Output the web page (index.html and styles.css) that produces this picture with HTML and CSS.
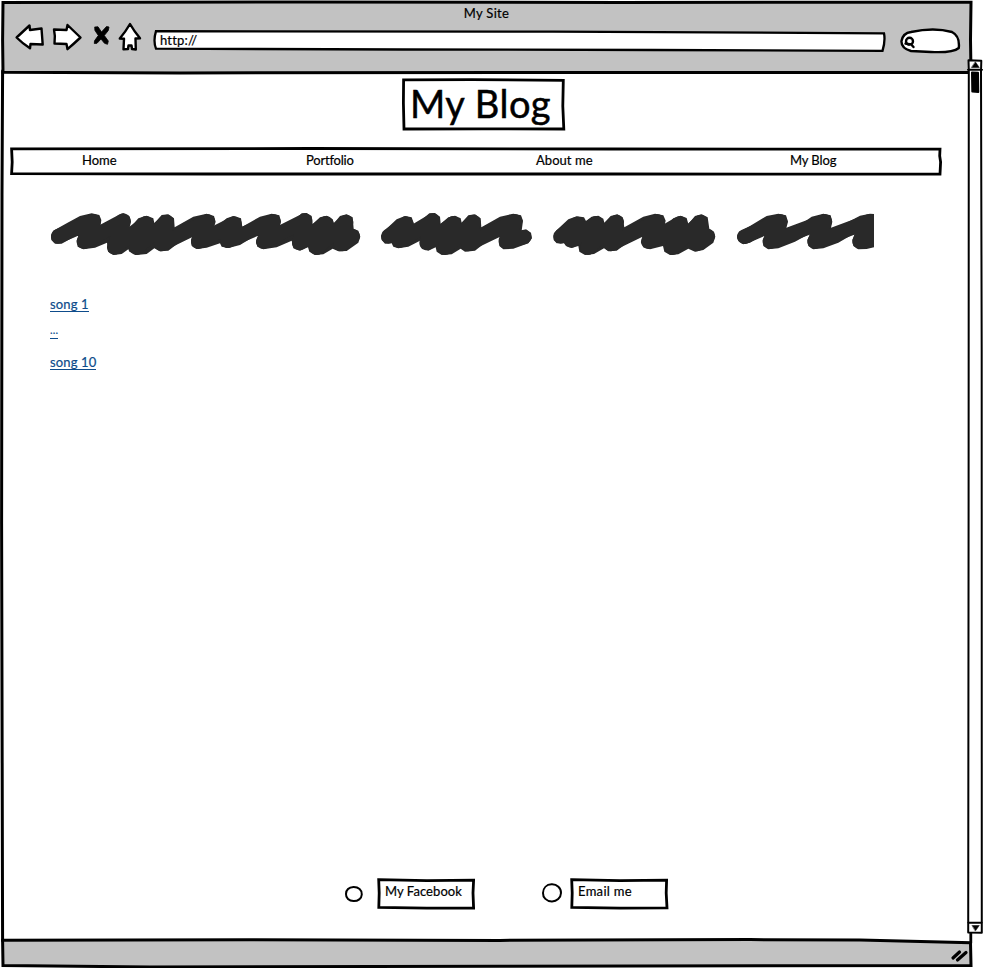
FILE: index.html
```html
<!DOCTYPE html>
<html lang="en">
<head>
<meta charset="utf-8">
<title>My Site</title>
<link rel="stylesheet" href="styles.css">
</head>
<body>
<div class="window">
  <header class="chrome">
    <svg class="sketch" viewBox="0 0 983 75"><path class="bar" d="M3 2.4L300 2L620 2.4L971 2.2L970.5 40L971 72.6L620 72.4L180 72.9L3 72.2L2.6 40Z"/></svg>
    <div class="site-title">My Site</div>
    <div class="toolbar">
      <svg class="tools" width="130" height="32" viewBox="14 21 130 32">
        <path d="M16.6 37.5L29.5 25.5L30 30L41.5 28.5L42.7 44.5L30.5 44L30 48.3Q22 43 16.6 37.5Z"/>
        <path d="M54 29.5L66.5 30L67.5 25L80.5 37.5Q73.5 44 67.5 49.2L66.5 44L54.5 43.5Q55.5 36 54 29.5Z"/>
        <path class="cross" d="M95 27L98 26.8L101.5 32L106.5 26.5L109 27L108.3 30.5L104.3 35.5L108.3 41L107.5 44.3L104.5 43.3L101 39L97 43.3L94.3 43.5L94.5 40.8L98.3 35.5L95 30.5Z"/>
        <path d="M130 24Q134 31 140 38.3L135.5 38.5L135.8 49.5L132 49L131.5 45.5H128.5L128 49L123.5 49.3L124 38.8L119.8 38.5Q126 31 130 24Z"/>
      </svg>
      <div class="address">
        <svg class="sketch" viewBox="0 0 734 24"><path d="M3 2.2L400 2.6L731 4.3Q732.5 12 729.5 21.8L500 21L250 20.5L3 19.7Q0 12 3 2.2Z"/></svg>
        <span>http://</span>
      </div>
      <svg class="search" width="62" height="28" viewBox="899 27 62 28">
        <path d="M911 32Q934 27 952 32Q960 36 958.8 48Q953 53 931 52L911 51Q901 48 901.5 41Q903 33 911 32Z"/>
        <circle cx="909.5" cy="41.3" r="3.5"/><path d="M905.5 43.5Q909 44.5 911 44.2L913.5 47"/>
      </svg>
    </div>
  </header>

  <main class="page">
    <svg class="sketch" viewBox="0 0 983 866" preserveAspectRatio="none"><path d="M2.6 -4L2 120L1.6 450L2.6 868"/></svg>
    <h1 class="blog-title">
      <svg class="sketch" viewBox="0 0 164 53"><path d="M1.6 1.8L70 1.6L161.3 2.4L160.8 28L161.8 51L80 50.8L2 51L1.4 25Z"/></svg>
      <span>My Blog</span>
    </h1>
    <nav class="menu">
      <svg class="sketch" viewBox="0 0 933 29"><path d="M1.6 1.8L300 1.5L600 2L930 2.2L929.7 9L930.6 15L930 27.2L600 27L200 27L1.6 26.6L2.2 15Z"/></svg>
      <a class="home">Home</a><a class="portfolio">Portfolio</a><a class="about">About me</a><a class="blog">My Blog</a>
    </nav>
    <svg class="scribble" width="834" height="65" viewBox="0 0 2502 195">
      <!-- filled bodies -->
      <path d="M33 108L40 92L80 70L120 48L155 40L178 45L184 60L180 90L200 78L235 45L250 40L268 48L273 65L268 86L295 55L320 47L340 55L343 70L365 45L385 43L402 55L404 82L460 50L500 41L522 48L527 65L520 88L560 55L580 48L603 55L607 80L660 50L695 41L718 46L723 65L716 92L750 72L785 40L800 39L815 48L818 72L840 52L860 47L878 58L882 70L900 48L920 43L938 52L941 86L955 92L961 110L955 128L920 153L895 154L878 146L850 163L825 165L808 155L804 142L780 152L760 145L755 122L710 142L670 148L652 140L648 125L657 100L600 135L565 144L545 140L540 130L500 143L470 147L455 138L453 120L460 100L420 125L385 152L360 154L343 145L320 162L290 165L268 155L265 148L245 162L220 165L204 155L201 128L165 143L130 148L113 140L110 122L117 102L65 131L45 131L34 120Z"/>
      <g transform="translate(990 0)">
        <path d="M34 108L40 95L80 58L105 48L125 52L133 75L155 60L178 40L195 39L210 50L212 72L235 52L255 47L272 55L275 68L295 46L315 43L332 55L334 82L390 50L430 41L453 46L459 62L455 92L468 88L483 98L486 115L475 130L430 146L400 148L388 138L386 118L392 102L345 128L315 152L285 155L272 146L245 163L215 165L200 155L197 142L175 152L155 145L150 122L115 140L85 145L70 140L65 130L45 131L35 120Z"/>
        <path d="M550 108L558 92L595 58L620 49L642 52L648 63L665 50L685 47L700 56L703 68L722 48L742 43L758 52L763 82L820 50L855 41L880 46L887 62L882 83L910 55L932 47L950 54L955 72L975 48L995 43L1013 52L1018 86L1032 95L1036 110L1030 128L1000 150L975 155L955 146L925 163L900 165L883 155L879 138L840 148L820 142L813 125L821 100L772 128L740 152L715 154L702 145L672 162L645 165L628 155L625 138L605 144L588 138L582 130L560 130L551 120Z"/>
      </g>
      <path transform="translate(1980 -180)" d="M111 290L118 275L150 258L200 228L235 221L258 226L264 245L257 272L290 262L335 230L370 221L392 226L397 245L391 272L440 248L480 227L510 221L522 222L522 322L500 327L475 328L460 318L457 300L465 279L415 308L370 325L340 328L325 318L322 300L331 280L285 305L235 325L205 328L190 318L188 300L197 279L150 308L130 313L115 303Z"/>
      <!-- round pen strokes -->
      <g class="pen">
        <path d="M55 109L160 64L132 125L250 62L223 142L318 70L290 143L380 66L365 132L503 64L475 125L583 71L563 122L700 64L670 125L795 62L778 129L858 70L830 143L918 66L903 132L938 109"/>
        <path d="M1045 109L1098 71L1078 122L1178 62L1160 129L1240 70L1216 143L1300 66L1285 132L1425 64L1398 125L1452 111"/>
        <path d="M1562 109L1612 72L1594 121L1668 70L1643 143L1730 66L1713 132L1852 64L1825 125L1920 70L1898 143L1982 66L1970 132L2003 109"/>
        <path d="M2113 110L2220 64L2190 125L2354 64L2324 125L2488 64L2459 125L2540 105"/>
      </g>
    </svg>
    <div class="songs"><a>song 1</a><a class="dots">...</a><a>song 10</a></div>
    <div class="contacts">
      <svg class="dot" width="20" height="20" viewBox="0 0 20 20"><path d="M9.5 3.1C14.5 3 18 6 17.8 10.5C17.6 14.5 14 17.3 9.5 17.1C5 17 1.8 14 2 10C2.2 6 5 3.3 9.5 3.1Z"/></svg>
      <div class="contact">
        <svg class="sketch" viewBox="0 0 99 32"><path d="M1.7 1.7L50 2.7L96.6 2.2L96 15L96.6 30L50 30.2L1.8 29.4L2.2 15Z"/></svg>
        <span>My Facebook</span>
      </div>
      <svg class="dot second" width="22" height="22" viewBox="0 0 22 22"><path d="M10.5 2.3C16 2 20.2 6 20 11C19.8 16 15.8 19.5 10.8 19.4C5.5 19.3 1.8 15.5 2 11C2.2 6 5.5 2.5 10.5 2.3Z"/></svg>
      <div class="contact">
        <svg class="sketch" viewBox="0 0 99 32"><path d="M1.7 1.7L50 2.7L96.6 2.2L96.2 15L97 29.8L50 30.2L1.8 29.4L2.2 15Z"/></svg>
        <span class="email">Email me</span>
      </div>
    </div>
  </main>

  <footer class="status">
    <svg class="sketch" viewBox="0 0 983 29"><path class="bar" d="M2.6 1.2L250 .8L500 1.4L750 .6L860 1L970.5 3.7L971 26.5L500 27.2L150 28L3 26.5Z"/><path d="M970.8 -7V4"/><path class="grip" d="M953 19L959.5 13M957.5 21L966 13.5"/></svg>
  </footer>

  <svg class="scrollbar" width="18" height="878" viewBox="965 58 18 878">
    <path d="M968.5 60.3L981.3 60.8L981 72L981.7 350L981.8 932.8L968.2 932.4L968.6 500L968.8 70ZM968 69.8H982M968 922.8H982"/>
    <path class="solid" d="M975.5 62L979.3 67.5H971.7Z"/>
    <path class="thumb" d="M972 72.5L978 72.8L978.3 92L972.3 91.5Z"/>
    <path class="solid" d="M972.3 925.5H979.3L975.5 930.8Z"/>
  </svg>
</div>
</body>
</html>
```
FILE: styles.css
```css
* { box-sizing: border-box; }
body { margin: 0; background: #fff; color: #000; font: 13px/16px Lato, "Open Sans", sans-serif; letter-spacing: .08px; -webkit-text-stroke: .2px; }
svg { display: block; flex: none; fill: #fff; stroke: #000; stroke-width: 2.4; stroke-linejoin: round; stroke-linecap: round; }
span, a { position: relative; white-space: nowrap; }

/* Hand-drawn outlines lie behind the content of their box. */
.sketch { position: absolute; left: 0; top: 0; width: 100%; height: 100%; stroke-width: 2.8; stroke-linejoin: miter; overflow: visible; }
.bar { fill: #c2c2c2; stroke-width: 3; }

.window { position: relative; width: 983px; height: 968px; overflow: hidden; display: flex; flex-direction: column; }

.chrome { position: relative; height: 75px; flex: none; padding-top: 5px; }
.site-title { position: relative; width: 973px; text-align: center; letter-spacing: .3px; }
.toolbar { position: relative; display: flex; align-items: flex-start; padding-left: 14px; }
.address { position: relative; width: 734px; height: 24px; margin: 8px 0 0 9px; padding: 3px 0 0 7px; letter-spacing: .2px; }
.address .sketch { stroke-width: 2.3; }
.search { margin: 6px 0 0 12px; }
.cross { stroke-width: .8; fill: #000; }

.page { position: relative; flex: 1; display: flex; flex-direction: column; }
.page > .sketch { stroke-width: 3; }
.blog-title { position: relative; width: 164px; height: 53px; margin: 3px 0 0 402px; padding-left: 8px; font-size: 38px; line-height: 51px; font-weight: 400; letter-spacing: .5px; -webkit-text-stroke: .5px; }
.menu { position: relative; display: flex; width: 933px; height: 29px; margin: 16px 0 0 10px; padding: 5px 0 0 72px; }
.home { width: 224px; letter-spacing: 0; }
.portfolio { width: 230px; letter-spacing: -.2px; }
.about { width: 254px; letter-spacing: .05px; }
.blog { letter-spacing: -.1px; }
.scribble { margin: 24px 0 0 40px; fill: #292929; stroke: none; }
.pen { fill: none; stroke: #292929; stroke-width: 44; }
.songs { display: flex; flex-direction: column; align-items: flex-start; gap: 14px; margin: 32px 0 0 50px; color: #0e4c8b; }
.songs a { height: 15px; line-height: 15px; border-bottom: 1px solid #0e4c8b; letter-spacing: .15px; }
.songs .dots { height: 13px; margin-bottom: 2px; font-size: 11px; line-height: 8px; letter-spacing: .1px; }

.contacts { display: flex; align-items: flex-start; margin: auto 0 29px 344px; }
.dot { margin-top: 6px; stroke-width: 2; }
.second { margin: 4px 0 0 65px; }
.contact { position: relative; width: 99px; height: 32px; margin-left: 13px; padding: 5px 0 0 8px; }
.second + .contact { margin-left: 7px; }
.email { letter-spacing: .3px; }

.status { position: relative; height: 29px; flex: none; }
.grip { fill: none; stroke-width: 3.2; stroke-linecap: round; }

.scrollbar { position: absolute; right: 0; top: 58px; stroke-width: 2; }
.solid { fill: #000; stroke-width: .5; }
.thumb { fill: #000; }
```
